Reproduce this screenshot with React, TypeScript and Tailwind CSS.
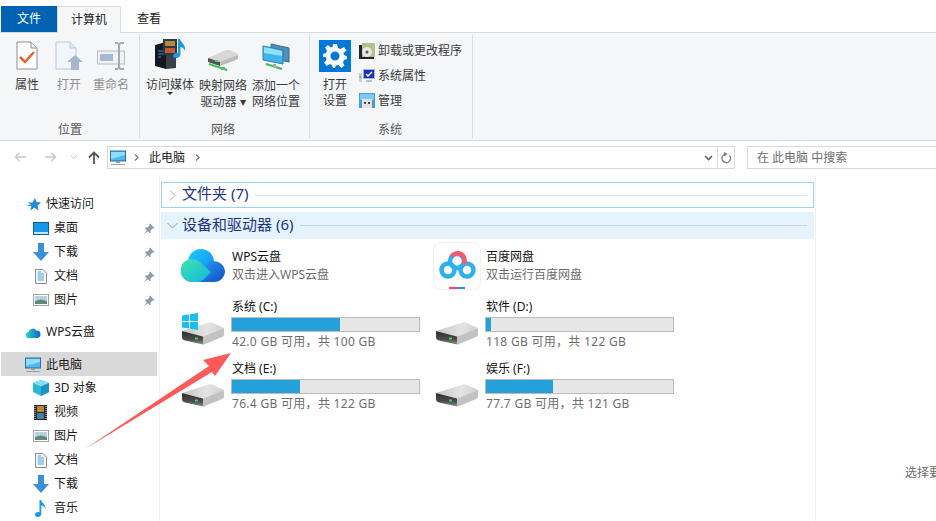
import React from "react";

const Drive = () => (
  <svg width="43" height="23" viewBox="0 0 43 23" className="block">
    <defs>
      <linearGradient id="dtop" x1="0" y1="0" x2="1" y2="0"><stop offset="0" stopColor="#c4c4c4" /><stop offset="0.6" stopColor="#e4e4e4" /><stop offset="1" stopColor="#d0d0d0" /></linearGradient>
      <linearGradient id="dfront" x1="0" y1="0" x2="0" y2="1"><stop offset="0" stopColor="#2e2e2e" /><stop offset="0.6" stopColor="#4a4a4a" /><stop offset="1" stopColor="#8e8e8e" /></linearGradient>
    </defs>
    <path d="M0 9 L27 0.500 Q29 0 31 1 L42 6 L21 14.500 Z" fill="url(#dtop)" />
    <path d="M21 14.500 L42 6 V13 Q42 14 40 15 L22 22.500 L21 22.500 Z" fill="#c2c2c2" />
    <path d="M0 9 L21 14.500 V22.500 L3 18.500 Q0 17.500 0 15 Z" fill="url(#dfront)" />
    <rect x="13" y="15.500" width="3" height="2" fill="#3fd45a" />
  </svg>
);

const WinLogo = () => (
  <svg width="16" height="17" viewBox="0 0 16 17" className="block">
    <path d="M0 2.500 L7 1.500 V8 H0 Z M8 1.300 L16 0 V8 H8 Z M0 9 H7 V15.500 L0 14.500 Z M8 9 H16 V17 L8 15.700 Z" fill="#19bff2" />
  </svg>
);

const PcIcon = ({ w = 16 }: { w?: number }) => (
  <svg width={w} height={w} viewBox="0 0 16 16" className="block">
    <rect x="0.500" y="1" width="15" height="10" fill="#4fb6ee" stroke="#2b6f9f" />
    <path d="M1 2 H15 V5 L1 9 Z" fill="#8fdcfb" />
    <rect x="6" y="11" width="4" height="2" fill="#8b9dab" />
    <rect x="1" y="14" width="14" height="1" fill="#8fa3b3" />
  </svg>
);

const Pin = () => (
  <svg width="12" height="12" viewBox="0 0 12 12" className="block">
    <path d="M7 0.500 L11.500 5 L10.500 5.800 L9.500 5.500 L7.500 7.500 L7.500 9.500 L6.500 10 L2 5.500 L2.500 4.500 L4.500 4.500 L6.500 2.500 L6.300 1.300 Z" fill="#8f9aa3" />
    <path d="M3.800 7.200 L0.500 11.500 L4.800 8.200 Z" fill="#8f9aa3" />
  </svg>
);

const DownArrow = () => (
  <svg width="16" height="18" viewBox="0 0 16 18" className="block">
    <path d="M5 0 H11 V9 H16 L8 18 L0 9 H5 Z" fill="#3d8fdc" />
  </svg>
);

const DesktopIcon = () => (
  <svg width="16" height="13" viewBox="0 0 16 13" className="block">
    <rect x="0.500" y="0.500" width="15" height="12" fill="#1597ec" stroke="#0c5f97" />
    <rect x="1" y="10" width="14" height="2" fill="#bfe6fb" />
  </svg>
);

const DocIcon = () => (
  <svg width="12" height="15" viewBox="0 0 12 15" className="block ml-[2px]">
    <path d="M0.500 0.500 H8 L11.500 4 V14.500 H0.500 Z" fill="#fff" stroke="#8b8b8b" />
    <path d="M2.500 3 H6 M2.500 5 H9 M2.500 7 H9 M2.500 9 H9 M2.500 11 H9" stroke="#3f9ad6" strokeWidth="1" />
  </svg>
);

const PicIcon = () => (
  <svg width="16" height="12" viewBox="0 0 16 12" className="block">
    <rect x="0.500" y="0.500" width="15" height="11" fill="#fff" stroke="#a3a3a3" />
    <rect x="2" y="2" width="12" height="5" fill="#b6d0e2" />
    <path d="M2 7 L8 5.500 L14 7 V10 H2 Z" fill="#5f8a78" />
  </svg>
);

const CubeIcon = () => (
  <svg width="16" height="16" viewBox="0 0 16 16" className="block">
    <path d="M8 0 L16 3 V12 L8 16 L0 12 V3 Z" fill="#2bb5d8" />
    <path d="M8 0 L16 3 L8 6.500 L0 3 Z" fill="#7fe3ee" />
    <path d="M8 6.500 L16 3 V12 L8 16 Z" fill="#1c93c4" />
  </svg>
);

const FilmIcon = () => (
  <svg width="13" height="15" viewBox="0 0 13 15" className="block ml-[1px]">
    <rect width="13" height="15" fill="#26282c" />
    <rect x="3" y="1" width="7" height="6" fill="#b9873a" />
    <rect x="3" y="8" width="7" height="6" fill="#3f7fa8" />
    <path d="M1 1 V14 M12 1 V14" stroke="#e6e6e6" strokeDasharray="1 1" />
  </svg>
);

const MusicIcon = () => (
  <svg width="12" height="17" viewBox="0 0 12 17" className="block ml-[2px]">
    <path d="M4.500 0 H6 C6.500 3 11 4 10.500 9 C9.800 7 8 5.500 6.300 5.500 V14 C6.300 16 4.500 17 2.800 17 C1 17 0 16 0 14.700 C0 13 2.500 11.500 4.500 12.200 Z" fill="#1b9ae6" />
  </svg>
);

const StarIcon = () => (
  <svg width="15" height="13" viewBox="0 0 15 13" className="block">
    <path d="M9 0 L10.500 4 L15 4.500 L11.500 7.500 L12.500 12.500 L8.500 9.800 L4 12.500 L5.500 8 H0 L5 6.500 L1.500 4.500 H6.500 Z" fill="#1f8fdc" />
  </svg>
);

const SmallCloud = () => (
  <svg width="15" height="11" viewBox="0 0 15 11" className="block">
    <defs><linearGradient id="sc" x1="0" x2="1"><stop offset="0" stopColor="#2bd6c0" /><stop offset="1" stopColor="#0b62d8" /></linearGradient></defs>
    <path d="M3 11 A3 3 0 0 1 2.500 5 A4.500 4.500 0 0 1 10.500 3.500 A3.800 3.800 0 0 1 11.500 11 Z" fill="url(#sc)" />
  </svg>
);

const WpsCloud = () => (
  <svg width="44" height="33" viewBox="0 0 44 33" className="block">
    <defs>
      <linearGradient id="w1" x1="0" y1="0" x2="1" y2="1"><stop offset="0" stopColor="#1ecbff" /><stop offset="1" stopColor="#1488f0" /></linearGradient>
      <linearGradient id="w2" x1="0" y1="0" x2="1" y2="1"><stop offset="0" stopColor="#2f9df5" /><stop offset="1" stopColor="#0c4fc4" /></linearGradient>
      <linearGradient id="w3" x1="0" y1="0" x2="1" y2="1"><stop offset="0" stopColor="#3de6ac" /><stop offset="1" stopColor="#14b7dc" /></linearGradient>
    </defs>
    <circle cx="20" cy="13" r="13" fill="url(#w1)" />
    <path d="M17 33 L27 14 A11 11 0 0 1 44 22 A11 11 0 0 1 33 33 Z" fill="url(#w2)" />
    <path d="M11 10 C16 10 19 13 22 16 L30 23 L23 30 C20 32.500 17 33 14 33 H11 A11.500 11.500 0 0 1 11 10 Z" fill="url(#w3)" />
  </svg>
);

const BaiduIcon = () => (
  <div className="w-12 h-12 -ml-[2px] rounded-lg border border-[#f0f0f0] bg-white overflow-hidden">
    <svg width="46" height="46" viewBox="0 0 46 46" className="block">
      <circle cx="14" cy="27" r="6.500" fill="none" stroke="#2db0f2" strokeWidth="4.500" />
      <circle cx="33" cy="27" r="6.500" fill="none" stroke="#2db0f2" strokeWidth="4.500" />
      <circle cx="23" cy="18" r="7" fill="none" stroke="#2db0f2" strokeWidth="4.500" />
      <path d="M17.500 13.500 A7 7 0 0 1 29.500 21" fill="none" stroke="#f65a6e" strokeWidth="4.500" />
      <rect x="15" y="44" width="8" height="2" fill="#f6466a" />
      <rect x="23" y="44" width="8" height="2" fill="#2d8df2" />
    </svg>
  </div>
);

const NavRow = ({ icon, label, pin }: { icon: React.ReactNode; label: string; pin?: boolean }) => (
  <div className="h-6 flex items-center pl-[32px] pr-[2px] text-[12px] text-[#1a1a1a]">
    <div className="w-[16px] mr-[5px] flex justify-start">{icon}</div>
    <span className="flex-1 whitespace-nowrap">{label}</span>
    {pin && <div className="w-[14px] mt-[1px]"><Pin /></div>}
  </div>
);

const DriveTile = ({ name, free, pct, win }: { name: string; free: string; pct: number; win?: boolean }) => (
  <div className="flex h-[62px]">
    <div className="w-[50px] shrink-0 relative pt-[26px] pl-[1px]">
      {win && <div className="absolute left-[1px] top-[17px] z-10"><WinLogo /></div>}
      <Drive />
    </div>
    <div className="w-[189px]">
      <div className="h-[21px] pl-[1px] leading-[22px] text-[12px] text-[#111]">{name}</div>
      <div className="h-[15px] bg-[#e6e6e6] border border-[#bcbcbc]">
        <div className="h-full bg-[#26a0da]" style={{ width: `${pct}%` }} />
      </div>
      <div className="h-[18px] pl-[1px] leading-[20px] text-[12px] text-[#6d6d6d] whitespace-nowrap tracking-[0.3px]">{free}</div>
    </div>
  </div>
);

const AppTile = ({ icon, name, sub, top }: { icon: React.ReactNode; name: string; sub: string; top: string }) => (
  <div className="flex h-[57px] w-[254px]">
    <div className={`w-[51px] shrink-0 ${top}`}>{icon}</div>
    <div className="pt-[9px] text-[12px]">
      <div className="h-[18px] leading-[18px] text-[#111]">{name}</div>
      <div className="h-[18px] leading-[18px] text-[#6d6d6d]">{sub}</div>
    </div>
  </div>
);

const Large = ({ icon, lines, w, dim, caret }: { icon: React.ReactNode; lines: string[]; w: string; dim?: boolean; caret?: boolean }) => (
  <div className={`${w} flex flex-col items-center shrink-0`}>
    <div className="h-[35px] flex items-end justify-center">{icon}</div>
    <div className={`text-[12px] leading-[16px] text-center whitespace-nowrap pt-[7px] ${dim ? "text-[#8f8f8f]" : "text-[#3a3a3a]"}`}>
      {lines.map((l) => <div key={l}>{l}</div>)}
      {caret && <div className="flex justify-center -mt-[1px]"><svg width="6" height="4" viewBox="0 0 6 4"><path d="M0 0 H6 L3 3 Z" fill="#333" /></svg></div>}
    </div>
  </div>
);

const Small = ({ icon, label }: { icon: React.ReactNode; label: string }) => (
  <div className="h-[25px] flex items-center text-[12px] text-[#3a3a3a] whitespace-nowrap">
    <div className="w-[19px] shrink-0">{icon}</div>
    {label}
  </div>
);

const Group = ({ w, label, labelPad = "", children }: { w: string; label: string; labelPad?: string; children: React.ReactNode }) => (
  <div className={`${w} shrink-0 h-[103px] border-r border-[#dcdddf] flex flex-col`}>
    <div className="flex-1 flex">{children}</div>
    <div className={`h-[21px] text-center text-[12px] leading-[26px] text-[#555] ${labelPad}`}>{label}</div>
  </div>
);

export default function App() {
  return (
    <div className="relative w-[936px] h-[521px] overflow-hidden bg-white flex flex-col font-['Noto_Sans','Noto_Sans_CJK_SC',sans-serif]">
      {/* tabs */}
      <div className="h-[33px] shrink-0 border-b border-[#dadbdc] pt-[6px] pl-[1px] flex items-stretch text-[12px]">
        <div className="w-[56px] h-[26px] bg-[#0063b1] text-white flex items-center justify-center">文件</div>
        <div className="w-[64px] h-[27px] bg-[#f5f6f7] border border-b-0 border-[#dadbdc] flex items-center justify-center text-[#222]">计算机</div>
        <div className="w-[56px] h-[26px] flex items-center justify-center text-[#222]">查看</div>
      </div>
      {/* ribbon */}
      <div className="h-[108px] shrink-0 bg-[#f5f6f7] border-b border-[#dadbdc] pt-[2px] pl-[1px] flex">
        <Group w="w-[139px]" label="位置">
          <div className="flex pl-[5px]">
            <Large w="w-[42px]" lines={["属性"]} icon={
              <svg width="22" height="29" viewBox="0 0 22 29" className="block"><path d="M1 1 H15 L21 7 V28 H1 Z" fill="#fff" stroke="#8f8f8f" /><path d="M15 1 V7 H21" fill="#eee" stroke="#8f8f8f" /><path d="M4 16 L9 21 L18 11" fill="none" stroke="#e8642c" strokeWidth="2.500" /></svg>
            } />
            <Large w="w-[42px]" dim lines={["打开"]} icon={
              <svg width="28" height="29" viewBox="0 0 28 29" className="block"><path d="M1 1 H15 L21 7 V28 H1 Z" fill="#f1f6fd" stroke="#b9c6d8" /><path d="M15 1 V7 H21" fill="#dfe8f3" stroke="#b9c6d8" /><path d="M20 14 L28 21 H24 V29 H16 V21 H12 Z" fill="#a6b7cd" /></svg>
            } />
            <Large w="w-[42px]" dim lines={["重命名"]} icon={
              <svg width="29" height="28" viewBox="0 0 29 28" className="block"><rect x="0.500" y="9" width="27" height="13" fill="#eef2f7" stroke="#b4bcc6" /><rect x="3" y="12" width="13" height="7" fill="#a8b8d0" /><path d="M18 1 H20 Q21 1 22 3 Q23 1 24 1 H27 M22 3 V25 M18 27 H20 Q21 27 22 25 Q23 27 24 27 H27" fill="none" stroke="#a3abb5" strokeWidth="2" /></svg>
            } />
          </div>
        </Group>
        <Group w="w-[170px]" label="网络" labelPad="pr-[3px]">
          <div className="flex pl-[5px]">
            <Large w="w-[50px]" lines={["访问媒体"]} caret icon={
              <svg width="32" height="31" viewBox="0 0 32 31" className="block"><path d="M1 6 L12 3 V30 L1 27 Z" fill="#15191f" /><path d="M12 3 L22 6 V29 L12 30 Z" fill="#3a4048" /><path d="M4 12 H9 M4 15 H9 M4 18 H7" stroke="#2b8fdc" /><rect x="9" y="0" width="14" height="16" fill="#2b3a44" /><rect x="11" y="2" width="10" height="5" fill="#b9873a" /><rect x="11" y="9" width="10" height="5" fill="#c25a34" /><path d="M24 0 H26 C27 4 32 5 31 12 C30 9 28 8 26.500 8 V15 C26.500 18 24 19 22 19 C20 19 19 18 19 17 C19 15 22 13 24 14 Z" fill="#1b9ae6" /></svg>
            } />
            <Large w="w-[56px] mt-[1px]" lines={["映射网络", "驱动器 ▾"]} icon={
              <svg width="32" height="22" viewBox="0 0 32 22" className="block"><path d="M1 9 L19 1 H23 L31 5 V10 L13 17 L1 13 Z" fill="#d7d7d7" /><path d="M1 9 L13 13 V17 L1 13 Z" fill="#555" /><path d="M13 13 L31 6 V10 L13 17 Z" fill="#bbb" /><rect x="8" y="11" width="3" height="2" fill="#3fd45a" /><path d="M2 15 L20 21" stroke="#3cc15a" strokeWidth="2" /><rect x="14" y="18" width="4" height="3" fill="#46c864" /></svg>
            } />
            <Large w="w-[50px] mt-[1px]" lines={["添加一个", "网络位置"]} icon={
              <svg width="28" height="28" viewBox="0 0 28 28" className="block"><path d="M9 1 L27 5 V19 L9 15 Z" fill="#4f8fb8" stroke="#2e6c94" /><path d="M1 3 L21 7 V21 L1 17 Z" fill="#3fb5ee" stroke="#2e7fb0" /><path d="M2 4 L20 8 V13 L2 10 Z" fill="#8fe0fb" /><path d="M4 21 L20 26" stroke="#39bf5a" strokeWidth="2" /><rect x="11" y="21" width="3" height="4" fill="#aaa" /></svg>
            } />
          </div>
        </Group>
        <Group w="w-[163px]" label="系统" labelPad="pr-[2px]">
          <div className="flex pl-[9px]">
            <div className="w-[32px] shrink-0 flex flex-col items-center">
              <div className="w-8 h-8 mt-[5px] bg-[#0078d7] flex items-center justify-center">
                <svg width="24" height="24" viewBox="0 0 24 24"><path fill="#fff" fillRule="evenodd" d="M10 0 H14 L15 4 L17.500 5 L21 3 L23.500 6.500 L20.500 9 L21 11 L24 12.500 V15 L21 16 L20 18.500 L21.500 21.500 L18.500 24 L15.500 21 L13 21.500 L12 24 H10 L9 21 L7 20 L3.500 22 L1 18.500 L3.500 16 L3 13.500 L0 12.500 V10 L3 9 L4 6.500 L2 3.500 L5 1 L8 3.500 L9.500 3 Z M12 7.500 A4.500 4.500 0 1 0 12 16.500 A4.500 4.500 0 1 0 12 7.500 Z" /></svg>
              </div>
              <div className="text-[12px] leading-[16px] text-center text-[#3a3a3a] whitespace-nowrap mt-[5px]"><div>打开</div><div>设置</div></div>
            </div>
            <div className="ml-[8px] pt-[3px]">
              <Small label="卸载或更改程序" icon={<svg width="16" height="16" viewBox="0 0 16 16" className="block"><rect y="2" width="15" height="14" fill="#20242a" /><rect x="3" y="0" width="13" height="14" fill="#b4c08c" /><circle cx="8" cy="9" r="5" fill="#e6e6e6" /><circle cx="8" cy="9" r="1.500" fill="#555" /></svg>} />
              <Small label="系统属性" icon={<svg width="16" height="14" viewBox="0 0 16 14" className="block"><rect x="0" y="4" width="3" height="9" fill="#c9ccd0" /><rect x="0.500" y="7" width="1.500" height="2" fill="#3fd45a" /><rect x="4" y="0" width="12" height="10" fill="#a9b3c0" /><rect x="5" y="1" width="10" height="8" fill="#1c2fc4" /><path d="M7 5 L9 7 L13 3" stroke="#fff" strokeWidth="1.500" fill="none" /><rect x="7" y="11" width="6" height="2" fill="#b9c0c8" /></svg>} />
              <Small label="管理" icon={<svg width="16" height="16" viewBox="0 0 16 16" className="block"><rect width="16" height="15" fill="#3f9ee8" /><path d="M1 1 H15 V7 H1 Z" fill="#7cc8f8" /><rect x="3" y="6" width="10" height="9" fill="#e2e2e2" /><rect x="5" y="9" width="2" height="2" fill="#444" /><rect x="9" y="9" width="2" height="2" fill="#444" /></svg>} />
            </div>
          </div>
        </Group>
      </div>
      {/* address */}
      <div className="h-[35px] shrink-0 flex pt-[5px]">
        <div className="w-[107px] shrink-0 h-[22px] flex items-center pl-[14px]">
          <div className="w-[30px]">
            <svg width="13" height="12" viewBox="0 0 14 12"><path d="M13 6 H2 M6 1.500 L1.500 6 L6 10.500" fill="none" stroke="#c9c9c9" strokeWidth="1.500" /></svg>
          </div>
          <div className="w-[26px]">
            <svg width="13" height="12" viewBox="0 0 14 12"><path d="M1 6 H12 M8 1.500 L12.500 6 L8 10.500" fill="none" stroke="#c9c9c9" strokeWidth="1.500" /></svg>
          </div>
          <div className="w-[18px]">
            <svg width="7" height="5" viewBox="0 0 7 5"><path d="M0.500 0.500 L3.500 3.500 L6.500 0.500" fill="none" stroke="#c9c9c9" /></svg>
          </div>
          <svg width="12" height="13" viewBox="0 0 12 13"><path d="M6 13 V2 M1 6.500 L6 1.500 L11 6.500" fill="none" stroke="#555" strokeWidth="1.800" /></svg>
        </div>
        <div className="w-[628px] shrink-0 h-[23px] border border-[#d9d9d9] flex items-center">
          <div className="ml-[2px] w-[16px]"><PcIcon /></div>
          <svg width="5" height="7" viewBox="0 0 5 7" className="ml-[8px]"><path d="M1 0.500 L4 3.500 L1 6.500" fill="none" stroke="#777" strokeWidth="1.200" /></svg>
          <span className="ml-[10px] text-[12px] text-[#222]">此电脑</span>
          <svg width="5" height="7" viewBox="0 0 5 7" className="ml-[10px]"><path d="M1 0.500 L4 3.500 L1 6.500" fill="none" stroke="#777" strokeWidth="1.200" /></svg>
          <div className="flex-1" />
          <svg width="9" height="6" viewBox="0 0 9 6" className="mr-[4px]"><path d="M1 1 L4.500 4.500 L8 1" fill="none" stroke="#666" strokeWidth="1.600" /></svg>
          <div className="w-[17px] h-full border-l border-[#d9d9d9] flex items-center justify-center">
            <svg width="11" height="12" viewBox="0 0 11 12"><path d="M8.500 3.500 A4.300 4.300 0 1 1 4 2.200" fill="none" stroke="#777" strokeWidth="1.200" /><path d="M3 0 L6.500 2 L3 4.500 Z" fill="#777" /></svg>
          </div>
        </div>
        <div className="ml-[12px] w-[220px] shrink-0 h-[23px] border border-[#d9d9d9] pl-[9px] text-[12px] leading-[21px] text-[#6d6d6d] whitespace-pre">在 此电脑 中搜索</div>
      </div>
      {/* body */}
      <div className="flex-1 flex min-h-0">
        <div className="w-[160px] shrink-0 border-r border-[#f2f2f2] pt-[16px] pl-[1px]">
          <div className="h-6 flex items-center pl-[25px] text-[12px] text-[#1a1a1a]"><div className="w-[20px]"><StarIcon /></div>快速访问</div>
          <NavRow icon={<DesktopIcon />} label="桌面" pin />
          <NavRow icon={<DownArrow />} label="下载" pin />
          <NavRow icon={<DocIcon />} label="文档" pin />
          <NavRow icon={<PicIcon />} label="图片" pin />
          <div className="h-6 mt-[8px] flex items-center pl-[25px] text-[12px] text-[#1a1a1a]"><div className="w-[20px]"><SmallCloud /></div>WPS云盘</div>
          <div className="h-6 mt-[8px] w-[156px] bg-[#d9d9d9] flex items-center pl-[24px] pt-[1px] text-[12px] text-[#1a1a1a]"><div className="w-[21px]"><PcIcon /></div>此电脑</div>
          <NavRow icon={<CubeIcon />} label="3D 对象" />
          <NavRow icon={<FilmIcon />} label="视频" />
          <NavRow icon={<PicIcon />} label="图片" />
          <NavRow icon={<DocIcon />} label="文档" />
          <NavRow icon={<DownArrow />} label="下载" />
          <NavRow icon={<MusicIcon />} label="音乐" />
        </div>
        <div className="w-[656px] shrink-0 border-r border-[#f2f2f2] pt-[6px] pl-[1px] pr-[1px]">
          <div className="h-[26px] border border-[#99d1ff] flex items-center pl-[7px] pr-[6px] text-[15px] text-[#1e3287]">
            <svg width="7" height="11" viewBox="0 0 7 11" className="mr-[6px]"><path d="M1 0.500 L6 5.500 L1 10.500" fill="none" stroke="#a6a6a6" /></svg>
            <span className="whitespace-nowrap pb-[3px]">文件夹 (7)</span>
            <div className="flex-1 h-px bg-[#e3e3e3] ml-[7px]" />
          </div>
          <div className="h-[27px] mt-[4px] bg-[#e5f3ff] flex items-center pl-[6px] pr-[7px] text-[15px] text-[#1e3287]">
            <svg width="11" height="7" viewBox="0 0 11 7" className="mr-[4px]"><path d="M0.500 1 L5.500 6 L10.500 1" fill="none" stroke="#8a97a3" /></svg>
            <span className="whitespace-nowrap pb-[2px]">设备和驱动器 (6)</span>
            <div className="flex-1 h-px bg-[#c8d6e2] ml-[7px]" />
          </div>
          <div className="pl-[20px]">
            <div className="flex">
              <AppTile top="pt-[10px]" icon={<WpsCloud />} name="WPS云盘" sub="双击进入WPS云盘" />
              <AppTile top="pt-[3px]" icon={<BaiduIcon />} name="百度网盘" sub="双击运行百度网盘" />
            </div>
            <div className="grid grid-cols-[254px_254px]">
              <DriveTile name="系统 (C:)" free="42.0 GB 可用，共 100 GB" pct={57.8} win />
              <DriveTile name="软件 (D:)" free="118 GB 可用，共 122 GB" pct={2.7} />
              <DriveTile name="文档 (E:)" free="76.4 GB 可用，共 122 GB" pct={36.4} />
              <DriveTile name="娱乐 (F:)" free="77.7 GB 可用，共 121 GB" pct={35.8} />
            </div>
          </div>
        </div>
        <div className="flex-1 min-w-0 overflow-hidden pl-[89px] pt-[288px] text-[12px] leading-[18px] text-[#6d6d6d] whitespace-nowrap">选择要预览的文件。</div>
      </div>
      {/* annotation arrow */}
      <svg width="936" height="521" viewBox="0 0 936 521" className="absolute left-0 top-0 pointer-events-none">
        <path d="M85 449 L209 366 L203 360 L231 353 L215 376 L212 372 Z" fill="#ff5a5a" />
      </svg>
    </div>
  );
}
